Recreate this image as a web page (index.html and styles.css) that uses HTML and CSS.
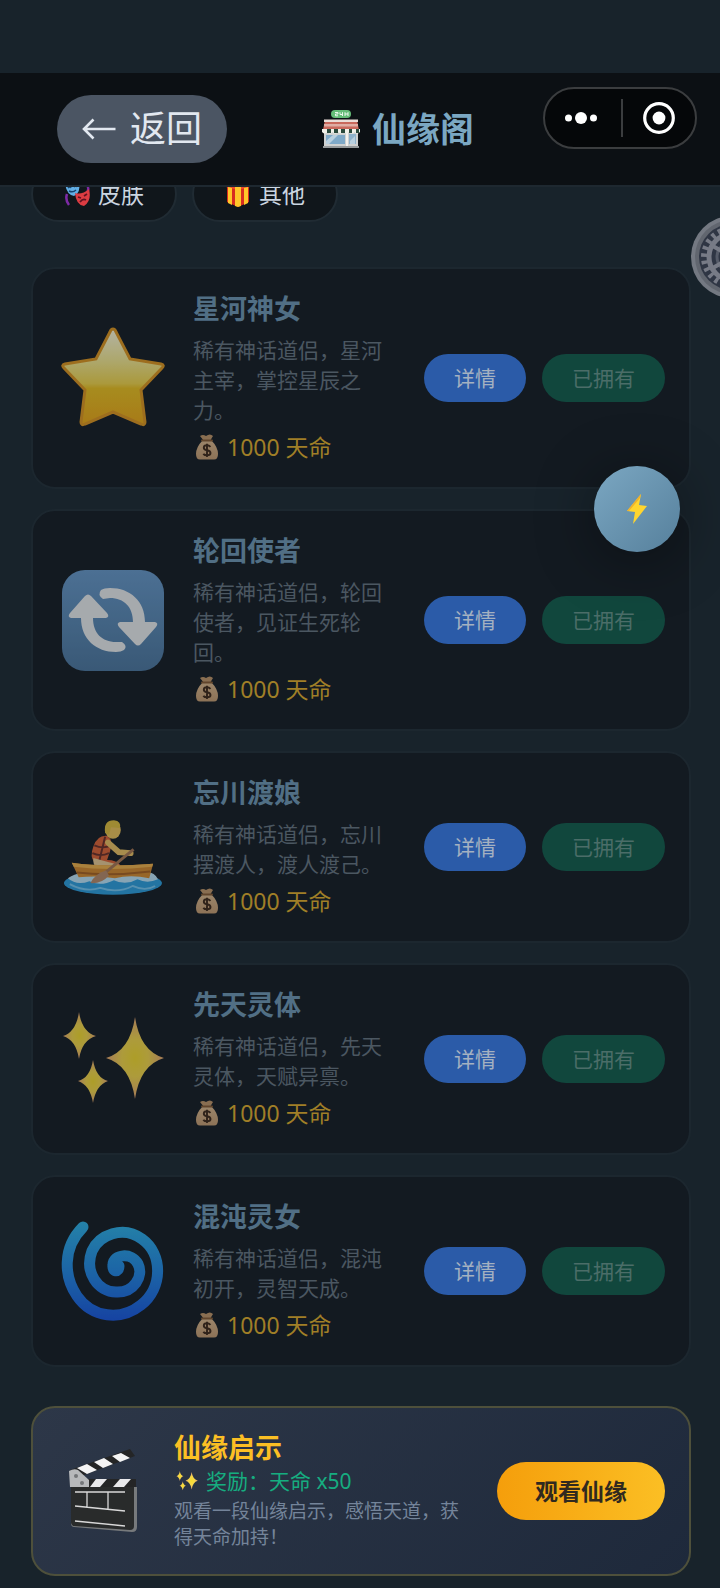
FILE: index.html
```html
<!DOCTYPE html>
<html lang="zh-CN">
<head>
<meta charset="utf-8">
<meta name="viewport" content="width=device-width, initial-scale=1">
<title>仙缘阁</title>
<link rel="stylesheet" href="styles.css">
</head>
<body>
<svg class="defs" aria-hidden="true">
  <defs>
    <linearGradient id="g-star" x1="0" y1="0" x2="0" y2="1"><stop offset="0" stop-color="#fffce0"/><stop offset=".35" stop-color="#f6e98c"/><stop offset=".57" stop-color="#f3d64a"/><stop offset=".62" stop-color="#eec21e"/><stop offset="1" stop-color="#efa914"/></linearGradient>
    <linearGradient id="g-blue" x1="0" y1="0" x2="0" y2="1"><stop offset="0" stop-color="#6799ca"/><stop offset="1" stop-color="#4c779f"/></linearGradient>
    <linearGradient id="g-spiral" gradientUnits="userSpaceOnUse" x1="0" y1="0" x2="0" y2="104"><stop offset="0" stop-color="#2eb6e8"/><stop offset=".5" stop-color="#2189e6"/><stop offset="1" stop-color="#1754df"/></linearGradient>
    <radialGradient id="g-spark"><stop offset="0" stop-color="#f6dc2c"/><stop offset=".45" stop-color="#f6d948"/><stop offset="1" stop-color="#eba873"/></radialGradient>
    <linearGradient id="g-bag" x1="0" y1="0" x2="0" y2="1"><stop offset="0" stop-color="#cbab84"/><stop offset="1" stop-color="#b59069"/></linearGradient>
    <symbol id="bag" viewBox="0 0 24 26">
      <path d="M5 2 Q8 0 11 2 Q15 -1 18 2 L15 7 H9Z" fill="#b18b62"/>
      <path d="M8 6 H16 Q23 13 23 20 Q23 25.500 19 25.500 H5 Q1 25.500 1 20 Q1 13 8 6Z" fill="url(#g-bag)"/>
      <path d="M7 6.500 H17" stroke="#7b5430" stroke-width="2" stroke-linecap="round"/>
      <path d="M15.500 12.800 Q14 11.300 12 11.300 Q8.800 11.300 8.800 13.700 Q8.800 15.600 12 16.200 Q15.500 16.900 15.500 19 Q15.500 21.300 12 21.300 Q9.500 21.300 8.300 19.800 M12 9.800 V23" fill="none" stroke="#3a2618" stroke-width="1.900"/>
    </symbol>
    <symbol id="sparkles" viewBox="0 0 104 104">
      <g fill="url(#g-spark)">
        <path d="M74 10 Q79 44 103 51 Q79 58 74 92 Q69 58 45 51 Q69 44 74 10Z"/>
        <path d="M18 5 Q21 25 35 29 Q21 33 18 52 Q15 33 2 29 Q15 25 18 5Z"/>
        <path d="M32 53 Q35 71 47 74 Q35 78 32 96 Q29 78 17 74 Q29 71 32 53Z"/>
      </g>
    </symbol>
  </defs>
</svg>

<header class="topbar">
  <button class="back" type="button">
    <svg class="back-arrow" viewBox="0 0 34 24" aria-hidden="true"><path d="M33 12 H2 M11 2.500 L1.500 12 L11 21.500" fill="none" stroke="currentColor" stroke-width="2.600"/></svg>
    <span>返回</span>
  </button>
  <h1 class="title">
    <svg class="title-icon" viewBox="0 0 38 38" aria-hidden="true">
      <path d="M3 10 H35 L37 20 H1Z" fill="#c9685c"/>
      <path d="M2 9.500 H36 V12 H2Z" fill="#e9dcd7"/><path d="M2 14 H36 V16.500 H2Z" fill="#dfaca3"/>
      <rect x="2" y="19" width="34" height="18" fill="#cfd1d1"/>
      <path d="M4 25 H23 V34 H4Z" fill="#7fa9c8"/><path d="M27 24 H34 V34 H27Z" fill="#8fb2cb"/>
      <path d="M4 31 L11 25 H16 L7 34 H4Z M28 31 L33 26 V34 H28Z" fill="#b9d0df"/>
      <path d="M24 23 H26 V37 H24Z" fill="#f3f1ee"/><path d="M1 36 H37 V38 H1Z" fill="#969a9c"/>
      <path d="M0 19 H38 V22 Q35 25 32.500 22 Q30 25 27 22 Q24 25 21.500 22 Q19 25 16 22 Q13 25 10.500 22 Q8 25 5.500 22 Q3 25 0 22Z" fill="#f1f1ea"/>
      <path d="M5 19 H9 V23 H5Z M12 19 H16 V23 H12Z M19 19 H23 V23 H19Z M27 19 H30 V23 H27Z M34 19 H37 V23 H34Z" fill="#29493c"/>
      <rect x="9" y="0" width="20" height="8" rx="4" fill="#65bd78"/>
      <path d="M13 2.500 H16 V4 H13.500 V5.800 H16 M18 2.200 V4.500 H21 M20.500 2.200 V6 M23 2.200 V6 M23 4 H26 M26 2.200 V6" fill="none" stroke="#eaf8ec" stroke-width="1"/>
    </svg>
    <span>仙缘阁</span>
  </h1>
  <div class="capsule">
    <button class="capsule-btn" type="button" aria-label="更多">
      <svg viewBox="0 0 34 14" width="34" height="14" aria-hidden="true"><g fill="#fff"><circle cx="4.500" cy="7" r="3.500"/><circle cx="17" cy="7" r="6"/><circle cx="29.500" cy="7" r="3.500"/></g></svg>
    </button>
    <button class="capsule-btn" type="button" aria-label="关闭">
      <svg viewBox="0 0 32 32" width="32" height="32" aria-hidden="true"><circle cx="16" cy="16" r="14.300" fill="none" stroke="#fff" stroke-width="3.200"/><circle cx="16" cy="16" r="6.400" fill="#fff"/></svg>
    </button>
  </div>
</header>

<nav class="tabs">
  <button class="tab" type="button">
    <svg viewBox="0 0 26 26" aria-hidden="true">
      <path d="M3 13 Q1 19 5 24 M23 4 Q26 8 22 14" fill="none" stroke="#7d2aa5" stroke-width="2.500"/>
      <path d="M1 3 Q7 6 15 1 Q17 12 10 15 Q3 14 1 3Z" fill="#62aee4"/>
      <path d="M4 7 Q6 5 7 7 M10 6 Q12 4 13 6 M5 10 Q9 12 12 9" fill="none" stroke="#17456f" stroke-width="1.500"/>
      <path d="M11 12 Q18 14 25 8 Q28 20 20 25 Q12 24 11 12Z" fill="#dc3c42"/>
      <path d="M14 16 L17 17 M20 15 L23 13 M16 21 Q19 17 22 19" fill="none" stroke="#5f1220" stroke-width="1.700"/>
    </svg>
    <span>皮肤</span>
  </button>
  <button class="tab" type="button">
    <svg viewBox="0 0 26 26" aria-hidden="true">
      <path d="M2 5 L13 8 L24 5 V21 L13 26 L2 21Z" fill="#d82c20"/><path d="M1 3 L13 0 L25 3 V6 L13 9 L1 6Z" fill="#ee4a2b"/>
      <path d="M10 6 H16 V25 L13 26 L10 25Z M3 6 L7 7 V24 L3 22Z M19 7 L23 6 V22 L19 24Z" fill="#ffc629"/>
    </svg>
    <span>其他</span>
  </button>
</nav>

<main class="content">
  <article class="card">
    <svg class="card-icon" viewBox="0 0 104 104" aria-hidden="true"><path d="M52 3 Q54 3 55 6 L69 33 L100 38 Q104 39 101 42 L80 64 L84 96 Q84 100 80 98 L52 86 L24 98 Q20 100 20 96 L24 64 L3 42 Q0 39 4 38 L35 33 L49 6 Q50 3 52 3Z" fill="url(#g-star)" stroke="#df961e" stroke-width="3"/></svg>
    <div class="info"><h2>星河神女</h2><p class="desc">稀有神话道侣，星河主宰，掌控星辰之力。</p><p class="price"><svg aria-hidden="true"><use href="#bag"/></svg>1000 天命</p></div>
    <div class="actions"><button class="btn detail" type="button">详情</button><button class="btn owned" type="button" disabled>已拥有</button></div>
  </article>
  <article class="card">
    <svg class="card-icon" viewBox="0 0 104 104" aria-hidden="true"><rect x="1" y="2" width="102" height="101" rx="23" fill="url(#g-blue)"/><path d="M42 31 Q36 27 40 22 Q43 20 49 20 C69 20 84 33 84 54 H94 Q98 55 95 59 L80 76 Q77 79 74 76 L58 59 Q55 55 59 54 H72 C72 39 63 30 49 30Z M61 74 Q67 78 63 82 Q60 84 55 84 C35 84 20 71 20 50 H10 Q6 49 9 45 L24 28 Q27 25 30 28 L46 45 Q49 49 45 50 H32 C32 65 41 74 55 74Z" fill="#eceef0"/></svg>
    <div class="info"><h2>轮回使者</h2><p class="desc">稀有神话道侣，轮回使者，见证生死轮回。</p><p class="price"><svg aria-hidden="true"><use href="#bag"/></svg>1000 天命</p></div>
    <div class="actions"><button class="btn detail" type="button">详情</button><button class="btn owned" type="button" disabled>已拥有</button></div>
  </article>
  <article class="card">
    <svg class="card-icon" viewBox="0 0 104 104" aria-hidden="true">
      <g transform="translate(1 8) scale(.98 .965)">
      <ellipse cx="52" cy="83" rx="50" ry="12" fill="#2c9fe0"/>
      <path d="M6 78 Q18 69 30 76 Q42 67 54 74 Q70 66 80 74 Q92 68 98 79 Q87 84 77 79 Q65 86 53 80 Q39 87 28 81 Q15 86 6 78Z" fill="#bfe6fa"/>
      <path d="M8 84 Q24 93 39 88 Q57 94 72 86 Q85 92 95 86" fill="none" stroke="#76c8f3" stroke-width="2"/>
      <path d="M33 61 Q28 56 32 45 Q36 33 46 34 Q53 39 49 50 L46 59 Q56 59 60 65 L40 67Z" fill="#df6335"/>
      <path d="M31 52 Q39 56 48 52 M33 44 Q42 48 50 44 M44 35 L38 60" fill="none" stroke="#6c2e26" stroke-width="2"/>
      <path d="M32 57 Q46 61 58 64 L59 68 H36 Q31 64 32 57Z" fill="#eacb95"/>
      <path d="M10 62 Q45 67 93 63 L89 78 Q70 74 54 78 Q37 75 17 77Z" fill="#d68b2d"/>
      <path d="M10 62 Q45 67 93 63 L92 66 Q49 71 12 66Z" fill="#f0b24b"/><path d="M15 72 Q50 76 90 71" fill="none" stroke="#a96220" stroke-width="2"/>
      <ellipse cx="52" cy="28" rx="8" ry="9" fill="#efc45a"/><path d="M44 31 Q42 18 53 18 Q61 19 59 26 L50 25 L48 33Z" fill="#e1c03c"/>
      <path d="M47 41 L58 51 L70 52" fill="none" stroke="#eec363" stroke-width="6" stroke-linecap="round"/>
      <path d="M73 48 L42 74" stroke="#a87652" stroke-width="3"/><path d="M45 70 Q34 73 29 83 Q40 84 48 75Z" fill="#b98b6a"/>
      </g>
    </svg>
    <div class="info"><h2>忘川渡娘</h2><p class="desc">稀有神话道侣，忘川摆渡人，渡人渡己。</p><p class="price"><svg aria-hidden="true"><use href="#bag"/></svg>1000 天命</p></div>
    <div class="actions"><button class="btn detail" type="button">详情</button><button class="btn owned" type="button" disabled>已拥有</button></div>
  </article>
  <article class="card">
    <svg class="card-icon" aria-hidden="true"><use href="#sparkles"/></svg>
    <div class="info"><h2>先天灵体</h2><p class="desc">稀有神话道侣，先天灵体，天赋异禀。</p><p class="price"><svg aria-hidden="true"><use href="#bag"/></svg>1000 天命</p></div>
    <div class="actions"><button class="btn detail" type="button">详情</button><button class="btn owned" type="button" disabled>已拥有</button></div>
  </article>
  <article class="card">
    <svg class="card-icon" viewBox="0 0 104 104" aria-hidden="true"><path d="M22 8 C1 29 3 58 16 77 C31 99 60 102 80 86 C102 69 102 35 81 20 C62 6 38 16 31 32 C23 53 37 73 55 73 C73 74 83 57 77 45 C71 33 52 35 52 46 C51 53 58 54 58 47" fill="none" stroke="url(#g-spiral)" stroke-width="11" stroke-linecap="round" stroke-linejoin="round"/></svg>
    <div class="info"><h2>混沌灵女</h2><p class="desc">稀有神话道侣，混沌初开，灵智天成。</p><p class="price"><svg aria-hidden="true"><use href="#bag"/></svg>1000 天命</p></div>
    <div class="actions"><button class="btn detail" type="button">详情</button><button class="btn owned" type="button" disabled>已拥有</button></div>
  </article>

  <section class="promo">
    <svg class="promo-icon" viewBox="0 0 68 84" aria-hidden="true">
      <path d="M2 38 H68 V78 Q68 83 63 83 L5 78 Q2 78 2 74Z" fill="#777a7c"/><path d="M2 38 H65 V77 Q65 81 61 81 L5 77 Q2 76 2 73Z" fill="#292b2b"/>
      <path d="M2 30 H67 V38 H2Z" fill="#242526"/><path d="M21 38 L27 30 H38 L31 38Z M44 38 L51 30 H62 L55 38Z" fill="#e9e9eb"/>
      <path d="M1 21 L61 0 L66 7 L7 29Z" fill="#242526"/><path d="M8 19 L18 15 L28 21 L18 25Z M25 13 L35 9 L44 15 L34 19Z M43 7 L52 4 L61 9 L51 13Z" fill="#f4f4f5"/>
      <path d="M0 22 Q5 19 9 21 L20 31 V38 H1Z" fill="#b7b9bb"/><circle cx="7" cy="27" r="2" fill="#747779"/><circle cx="13" cy="34" r="2" fill="#747779"/>
      <path d="M6 43 H56 M6 57 L56 62 M6 72 L56 77 M18 43 V58 M39 43 V60" fill="none" stroke="#d9d9d9" stroke-width="1.300"/>
    </svg>
    <div class="promo-info">
      <h2>仙缘启示</h2>
      <p class="reward"><svg aria-hidden="true"><use href="#sparkles"/></svg>奖励：天命 x50</p>
      <p class="promo-desc">观看一段仙缘启示，感悟天道，获得天命加持！</p>
    </div>
    <button class="watch" type="button">观看仙缘</button>
  </section>
</main>

<div class="floating-layer">
  <button class="gear" type="button" aria-label="设置">
    <svg viewBox="0 0 82 82" aria-hidden="true">
      <circle cx="41" cy="41" r="41" fill="#747982"/><circle cx="41" cy="41" r="37" fill="#61666f"/><circle cx="41" cy="41" r="33" fill="#2f3644"/>
      <circle cx="41" cy="41" r="28" fill="none" stroke="#777b86" stroke-width="6" stroke-dasharray="3.500 3.830"/>
      <circle cx="41" cy="41" r="23" fill="none" stroke="#777b86" stroke-width="5"/>
      <circle cx="41" cy="41" r="15" fill="none" stroke="#555b68" stroke-width="3"/>
      <path d="M41 41 L20 53 M41 41 L20 29 M41 41 H65" stroke="#777b86" stroke-width="4"/>
    </svg>
  </button>
  <button class="bolt" type="button" aria-label="快捷操作">
    <svg viewBox="0 0 20 30" aria-hidden="true"><path d="M14 0 L0 17 L8 18 L6 30 L20 12 L12 11Z" fill="#ffd52e"/><path d="M14 0 L0 17 L2 17 L13 4Z" fill="#eeb02e"/></svg>
  </button>
</div>
</body>
</html>
```

FILE: styles.css
```css
* { box-sizing: border-box; }

body {
  margin: 0;
  min-height: 100vh;
  padding-top: 73px;
  position: relative;
  overflow-x: hidden;
  background: #18232b;
  color: #cbd5e1;
  font-family: "Noto Sans", "Noto Sans CJK SC", sans-serif;
}

h1, h2, p { margin: 0; }
button { border: 0; margin: 0; font-family: inherit; }
svg { display: block; flex: none; }
.defs { position: absolute; width: 0; height: 0; }

.topbar {
  position: relative;
  z-index: 2;
  display: flex;
  align-items: flex-start;
  padding: 14px 23px 22px 57px;
  border-bottom: 2px solid #1e2830;
  background: #0c1014;
}

.back {
  display: flex;
  align-items: center;
  gap: 13px;
  height: 68px;
  margin-top: 8px;
  padding: 0 25px;
  border-radius: 34px;
  background: #4b5563;
  color: #e2e8f0;
  font-size: 36px;
  line-height: 48px;
}
.back-arrow { width: 35px; height: 24px; }

.title {
  flex: 1;
  display: flex;
  align-items: center;
  justify-content: center;
  gap: 12px;
  margin-top: 8px;
  padding-left: 26px;
  height: 68px;
  color: #7ba7c2;
  font-size: 34px;
  font-weight: 700;
  line-height: 48px;
}
.title-icon { width: 38px; height: 38px; }

.capsule {
  display: flex;
  width: 154px;
  height: 62px;
  border: 2px solid #3b3d3f;
  border-radius: 31px;
  background: #050709;
}
.capsule-btn {
  flex: 1;
  display: flex;
  align-items: center;
  justify-content: center;
  padding: 0 4px 0 0;
  background: none;
}
.capsule-btn + .capsule-btn {
  padding: 0 0 0 3px;
  background: linear-gradient(#3b3d3f, #3b3d3f) left center / 2px 38px no-repeat;
}

.tabs {
  display: flex;
  gap: 15px;
  margin-top: -21px;
  padding: 0 31px;
}
.tab {
  display: flex;
  align-items: center;
  gap: 8px;
  height: 56px;
  padding: 0 31px;
  border: 2px solid #202b33;
  border-radius: 28px;
  background: #10161b;
  color: #cbd5e1;
  font-size: 23px;
  line-height: 32px;
}
.tab svg { width: 26px; height: 26px; }

.content {
  display: flex;
  flex-direction: column;
  gap: 20px;
  padding: 45px 29px 10px 31px;
}

.card {
  display: flex;
  align-items: center;
  gap: 24px;
  padding: 24px;
  border: 2px solid #1c272f;
  border-radius: 24px;
  background: #131a21;
}
.card-icon { width: 104px; height: 104px; margin: 0 4px; opacity: .68; }
.info { flex: 1; min-width: 0; }
.info h2 { color: #516f85; font-size: 27px; line-height: 32px; }
.desc { margin-top: 10px; color: #4b5761; font-size: 21px; line-height: 30px; }
.price {
  display: flex;
  align-items: center;
  gap: 8px;
  margin-top: 6px;
  color: #a07f27;
  font-size: 23px;
  line-height: 32px;
}
.price svg { width: 24px; height: 26px; margin-left: 2px; opacity: .75; }

.actions { display: flex; gap: 16px; }
.btn {
  height: 48px;
  padding: 0 30px;
  border-radius: 24px;
  font-size: 21px;
  line-height: 30px;
  white-space: nowrap;
}
.detail { background: #2b5ba8; color: #a4b1c1; }
.owned { background: #11473d; color: #4b6d68; }

.promo {
  display: flex;
  align-items: center;
  margin-top: 19px;
  padding: 24px;
  border: 2px solid #4e503b;
  border-radius: 24px;
  background: linear-gradient(135deg, #2d3748, #1e293b);
}
.promo-icon { width: 68px; height: 84px; margin: 0 37px 0 12px; }
.promo-info { flex: 1; min-width: 0; margin-right: 24px; }
.promo h2 { color: #fbbf24; font-size: 27px; line-height: 32px; }
.reward {
  display: flex;
  align-items: center;
  gap: 8px;
  color: #16ad80;
  font-size: 21px;
  line-height: 34px;
}
.reward svg { width: 22px; height: 22px; margin-left: 2px; }
.promo-desc { color: #74849a; font-size: 19px; line-height: 26px; }
.watch {
  height: 58px;
  padding: 0 38px;
  border-radius: 29px;
  background: linear-gradient(90deg, #f59e0b, #fbbf24);
  color: #30291f;
  font-size: 23px;
  font-weight: 600;
  line-height: 32px;
  white-space: nowrap;
}

.floating-layer {
  position: absolute;
  inset: 0;
  z-index: 3;
  overflow: hidden;
  pointer-events: none;
}
.gear, .bolt { position: absolute; padding: 0; border-radius: 50%; pointer-events: auto; }
.gear { top: 216px; right: -53px; width: 82px; height: 82px; background: none; }
.bolt {
  top: 466px;
  right: 40px;
  display: flex;
  align-items: center;
  justify-content: center;
  width: 86px;
  height: 86px;
  background: linear-gradient(135deg, #7ba7c2, #56809c);
  box-shadow: 0 8px 60px rgba(0, 0, 0, .4);
}
.bolt svg { width: 20px; height: 30px; }
```
